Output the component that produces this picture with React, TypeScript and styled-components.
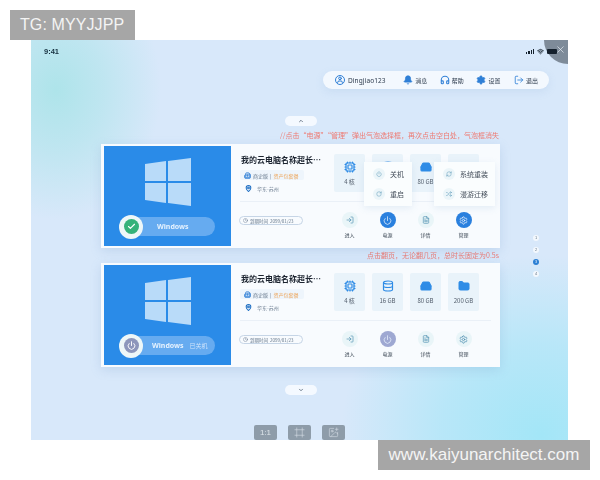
import React from 'react'
import styled, { createGlobalStyle } from 'styled-components'
import {
  Bell, Building2, Check, ChevronDown, ChevronUp, Clock, Cpu, Database, FileText, Folder, Frame, HardDrive,
  Headphones, ImagePlus, LogIn, LogOut, MapPin, Power, RefreshCw, RotateCw, Settings, Shuffle, User, Wifi, X
} from 'lucide-react'

const GlobalStyle = createGlobalStyle`
  html, body { margin: 0; padding: 0; background: #fff; }
  * { box-sizing: border-box; }
  body { font-family: "Noto Sans CJK SC", "Noto Sans", sans-serif; }
`

const specs = [
  { icon: <Cpu size={12} strokeWidth={2.4} />, label: '4 核', covered: false },
  { icon: <Database size={12} strokeWidth={2.4} />, label: '16 GB', covered: true },
  { icon: <HardDrive size={12} strokeWidth={2.4} fill="#2f8ce6" />, label: '80 GB', covered: false },
  { icon: <Folder size={12} strokeWidth={2} fill="#2f8ce6" />, label: '200 GB', covered: true },
]

function WindowsLogo() {
  return (
    <svg width="46" height="48" viewBox="0 0 46 48">
      <g fill="#b9dbf9">
        <polygon points="0,6 21,3 21,23 0,23" />
        <polygon points="23,3 46,0 46,23 23,23" />
        <polygon points="0,25 21,25 21,45 0,42" />
        <polygon points="23,25 46,25 46,48 23,45" />
      </g>
    </svg>
  )
}

function MachineCard({ on }: { on: boolean }) {
  const actionState = on ? 'active' : 'off'
  return (
    <Card>
      <SystemPanel>
        <WindowsLogo />
        <SystemPill>
          <StatusHalo>
            <StatusDot $on={on}>
              {on ? <Check size={9} strokeWidth={3} /> : <Power size={9} strokeWidth={2.5} />}
            </StatusDot>
          </StatusHalo>
          <SystemName $on={on}>Windows</SystemName>
          {!on && <SystemState>已关机</SystemState>}
        </SystemPill>
      </SystemPanel>
      <CardBody>
        <TopRow>
          <Info>
            <Title>我的云电脑名称超长…</Title>
            <Tag>
              <Building2 size={7} color="#2f7fd6" strokeWidth={3} />
              <span>商企版</span> | <em>资产包套餐</em>
            </Tag>
            <Place>
              <MapPin size={7} color="#1f6fc4" strokeWidth={3.5} />
              <span>华东-苏州</span>
            </Place>
          </Info>
          <ColumnGrid>
            {specs.map((s) => (
              <Spec key={s.label}>
                <SpecIcon>{s.icon}</SpecIcon>
                {/* the bubbles sit on top of these labels while the card is on */}
                {!(on && s.covered) && <SpecLabel>{s.label}</SpecLabel>}
              </Spec>
            ))}
          </ColumnGrid>
        </TopRow>
        <BottomRow>
          <Expiry>
            <Clock size={5} />
            到期时间&nbsp;&nbsp;2099/01/23
          </Expiry>
          <ColumnGrid>
            <Action>
              <ActionCircle><LogIn size={8} /></ActionCircle>
              <ActionLabel>进入</ActionLabel>
            </Action>
            <Action>
              <ActionCircle $state={actionState}><Power size={9} /></ActionCircle>
              <ActionLabel>电源</ActionLabel>
            </Action>
            <Action>
              <ActionCircle><FileText size={8} /></ActionCircle>
              <ActionLabel>详情</ActionLabel>
            </Action>
            <Action>
              <ActionCircle $state={on ? 'active' : undefined}><Settings size={9} /></ActionCircle>
              <ActionLabel>管理</ActionLabel>
            </Action>
          </ColumnGrid>
        </BottomRow>
      </CardBody>
      {on && (
        <>
          <Bubble $left={263} $width={48}>
            <BubbleItem><BubbleIcon><Power size={6} /></BubbleIcon>关机</BubbleItem>
            <BubbleItem><BubbleIcon><RotateCw size={6} /></BubbleIcon>重启</BubbleItem>
          </Bubble>
          <Bubble $left={333} $width={61}>
            <BubbleItem><BubbleIcon><RefreshCw size={6} /></BubbleIcon>系统重装</BubbleItem>
            <BubbleItem><BubbleIcon><Shuffle size={6} /></BubbleIcon>漫游迁移</BubbleItem>
          </Bubble>
        </>
      )}
    </Card>
  )
}

export default function App() {
  return (
    <Page>
      <GlobalStyle />
      <Screen>
        <Corner><X size={11} strokeWidth={1.5} /></Corner>
        <StatusBar>
          <Time>9:41</Time>
          <StatusIcons>
            <Bars><i /><i /><i /><i /></Bars>
            <Wifi size={7} strokeWidth={3} />
            <Battery />
          </StatusIcons>
        </StatusBar>
        <NavRow>
          <NavPill>
            <UserBlock>
              <Avatar><User size={8} strokeWidth={3} /></Avatar>
              Dingjiao123
            </UserBlock>
            <NavItem><Bell size={10} color="#2f7fd6" fill="#2f7fd6" />消息</NavItem>
            <NavItem><Headphones size={10} color="#2f7fd6" strokeWidth={2.6} />帮助</NavItem>
            <NavItem><Settings size={10} color="#2f7fd6" fill="#2f7fd6" />设置</NavItem>
            <NavItem><LogOut size={10} color="#2f7fd6" />退出</NavItem>
          </NavPill>
        </NavRow>
        <PagerPill><ChevronUp size={6} strokeWidth={3} /></PagerPill>
        <Hint $height={18}>{'//点击“电源”“管理”弹出气泡选择框\uFF0C再次点击空白处\uFF0C气泡框消失'}</Hint>
        <MachineCard on />
        <Hint $height={15}>{'点击翻页\uFF0C无论翻几页\uFF0C总时长固定为0.5s'}</Hint>
        <MachineCard on={false} />
        <PagerPill $bottom><ChevronDown size={6} strokeWidth={3} /></PagerPill>
        <ToolBar>
          <ToolButton>1:1</ToolButton>
          <ToolButton><Frame size={11} strokeWidth={1.2} /></ToolButton>
          <ToolButton><ImagePlus size={11} strokeWidth={1.2} /></ToolButton>
        </ToolBar>
        <PageDots>
          <Dot>1</Dot>
          <Dot>2</Dot>
          <Dot $active>3</Dot>
          <Dot>4</Dot>
        </PageDots>
      </Screen>
      <TopMark>TG: MYYJJPP</TopMark>
      <BottomMark>www.kaiyunarchitect.com</BottomMark>
    </Page>
  )
}

const Page = styled.div`
  position: relative;
  width: 600px;
  height: 480px;
  padding: 40px 0 0 31px;
  background: #fff;
  overflow: hidden;
`

const TopMark = styled.div`
  position: absolute;
  left: 10px;
  top: 10px;
  width: 125px;
  height: 30px;
  background: #a6a6a6;
  color: #f4f4f4;
  font: 16px/30px "Liberation Sans", sans-serif;
  letter-spacing: 0.1px;
  padding-left: 10px;
`

const BottomMark = styled.div`
  position: absolute;
  left: 378px;
  top: 440px;
  width: 212px;
  height: 30px;
  background: #a6a6a6;
  color: #f4f4f4;
  font: 17px/30px "Liberation Sans", sans-serif;
  text-align: center;
`

const Screen = styled.div`
  position: relative;
  width: 537px;
  height: 400px;
  padding: 0 68px 0 70px;
  overflow: hidden;
  display: flex;
  flex-direction: column;
  filter: blur(0.35px);
  background:
    radial-gradient(ellipse 105px 130px at 25px 50px, #aee4ea 0%, rgba(174, 228, 234, 0.6) 45%, rgba(174, 228, 234, 0) 100%),
    radial-gradient(ellipse 200px 180px at 510px 395px, #a3e6f7 0%, rgba(163, 230, 247, 0.6) 50%, rgba(163, 230, 247, 0) 100%),
    #d8e8fa;
`

const Corner = styled.div`
  position: absolute;
  top: -24px;
  right: -24px;
  width: 48px;
  height: 48px;
  border-radius: 50%;
  background: #7e8b99;
  color: #e8eef4;
  & svg { position: absolute; left: 11px; top: 28px; }
`

const StatusBar = styled.div`
  position: relative;
  height: 22px;
  margin: 0 -57px 0 -57px;
  display: flex;
  align-items: center;
  justify-content: space-between;
`

const Time = styled.span`
  font: 700 7.5px "Liberation Sans", sans-serif;
  color: #16303f;
`

const StatusIcons = styled.div`
  display: flex;
  align-items: center;
  gap: 3px;
  color: #14202c;
`

const Bars = styled.div`
  display: flex;
  align-items: flex-end;
  gap: 1px;
  height: 5px;
  & i { display: block; width: 1.2px; background: #14202c; }
  & i:nth-child(1) { height: 2px; }
  & i:nth-child(2) { height: 3px; }
  & i:nth-child(3) { height: 4px; }
  & i:nth-child(4) { height: 5px; }
`

const Battery = styled.div`
  width: 10px;
  height: 5px;
  border-radius: 1px;
  background: #14202c;
`

const NavRow = styled.div`
  display: flex;
  justify-content: flex-end;
  margin: 9px -49px 0 0;
`

const NavPill = styled.div`
  display: flex;
  align-items: center;
  width: 226px;
  height: 18px;
  padding: 0 11px 0 12px;
  border-radius: 9px;
  background: #f3f8fe;
  box-shadow: 0 3px 8px rgba(120, 160, 210, 0.15);
`

const UserBlock = styled.div`
  display: flex;
  align-items: center;
  gap: 3px;
  width: 69px;
  font: 6.5px "Noto Sans", sans-serif;
  color: #2c3a4c;
  letter-spacing: 0.1px;
`

const Avatar = styled.span`
  display: flex;
  align-items: center;
  justify-content: center;
  width: 10px;
  height: 10px;
  border-radius: 50%;
  border: 1px solid #2f7fd6;
  color: #2f7fd6;
  overflow: hidden;
`

const NavItem = styled.div`
  display: flex;
  align-items: center;
  gap: 2px;
  width: 37px;
  font-size: 6px;
  color: #2c3a4c;
  white-space: nowrap;
  &:last-child { width: 24px; margin-left: 1px; }
`

const PagerPill = styled.div<{ $bottom?: boolean }>`
  align-self: center;
  display: flex;
  align-items: center;
  justify-content: center;
  width: 32px;
  height: 10px;
  margin-top: ${(p) => (p.$bottom ? '18px' : '27px')};
  border-radius: 5px;
  background: #f4f9ff;
  color: #4a5a6c;
`

const Hint = styled.div<{ $height: number }>`
  height: ${(p) => p.$height}px;
  line-height: ${(p) => p.$height}px;
  font-size: 7px;
  color: #ee7a72;
  text-align: right;
  white-space: nowrap;
  margin-right: 1px;
`

const Card = styled.div`
  position: relative;
  flex: none;
  display: flex;
  width: 399px;
  height: 104px;
  padding: 2px 0 2px 3px;
  background: #f8fbfe;
  box-shadow: 0 3px 10px rgba(110, 150, 200, 0.22);
`

const SystemPanel = styled.div`
  flex: none;
  width: 127px;
  height: 100px;
  padding-top: 12px;
  display: flex;
  flex-direction: column;
  align-items: center;
  gap: 11px;
  background: #2a8be8;
`

const SystemPill = styled.div`
  display: flex;
  align-items: center;
  width: 95px;
  height: 19px;
  border-radius: 10px;
  background: #66abf0;
  color: #e6f2fe;
`

const StatusHalo = styled.div`
  flex: none;
  display: flex;
  align-items: center;
  justify-content: center;
  width: 24px;
  height: 24px;
  margin-left: -1px;
  border-radius: 50%;
  background: #eef7f8;
`

const StatusDot = styled.div<{ $on: boolean }>`
  display: flex;
  align-items: center;
  justify-content: center;
  width: 15px;
  height: 15px;
  border-radius: 50%;
  background: ${(p) => (p.$on ? '#35b27a' : '#8d96bb')};
  color: #fff;
`

const SystemName = styled.span<{ $on: boolean }>`
  font: 700 7px "Noto Sans", sans-serif;
  margin-left: ${(p) => (p.$on ? '14px' : '9px')};
`

const SystemState = styled.span`
  font-size: 6px;
  margin-left: 6px;
  color: #cfe4fb;
`

const CardBody = styled.div`
  flex: 1;
  min-width: 0;
  display: flex;
  flex-direction: column;
  padding-left: 9px;
`

const TopRow = styled.div`
  display: grid;
  grid-template-columns: 94px 1fr;
  height: 56px;
  padding-top: 8px;
  margin-right: 9px;
  border-bottom: 1px solid #eaf0f7;
`

const BottomRow = styled.div`
  display: grid;
  grid-template-columns: 94px 1fr;
  align-items: start;
  padding-top: 10px;
`

const ColumnGrid = styled.div`
  display: grid;
  grid-template-columns: repeat(4, 31px);
  gap: 7px;
`

const Info = styled.div`
  display: flex;
  flex-direction: column;
  align-items: flex-start;
`

const Title = styled.div`
  margin-left: 1px;
  font-size: 8px;
  line-height: 11px;
  font-weight: 700;
  color: #1c2430;
  white-space: nowrap;
`

const Tag = styled.div`
  display: flex;
  align-items: center;
  gap: 2px;
  width: 64px;
  height: 10px;
  margin-top: 5px;
  padding-left: 4px;
  border-radius: 2px;
  background: #eef5fc;
  font-size: 5px;
  color: #66788c;
  white-space: nowrap;
  & em { font-style: normal; color: #eda65c; }
`

const Place = styled.div`
  display: flex;
  align-items: center;
  gap: 5px;
  margin-top: 5px;
  padding-left: 5px;
  font-size: 5px;
  color: #66788c;
`

const Spec = styled.div`
  height: 38px;
  display: flex;
  flex-direction: column;
  align-items: center;
  padding-top: 7px;
  border-radius: 2px;
  background: #e9f3fa;
`

const SpecIcon = styled.div`
  display: flex;
  height: 13px;
  color: #2f8ce6;
`

const SpecLabel = styled.div`
  margin-top: 4px;
  font-size: 6px;
  line-height: 8px;
  color: #55606e;
  white-space: nowrap;
`

const Expiry = styled.div`
  display: flex;
  align-items: center;
  gap: 2px;
  width: 64px;
  height: 9px;
  margin-top: 4px;
  margin-left: -1px;
  padding-left: 3px;
  border: 1px solid #c6d5e6;
  border-radius: 5px;
  font-size: 4.5px;
  color: #66788c;
  white-space: nowrap;
`

const Action = styled.div`
  display: flex;
  flex-direction: column;
  align-items: center;
`

const ActionCircle = styled.div<{ $state?: string }>`
  display: flex;
  align-items: center;
  justify-content: center;
  width: 16px;
  height: 16px;
  border-radius: 50%;
  background: ${(p) => (p.$state === 'active' ? '#2a80de' : p.$state === 'off' ? '#9ea8d2' : '#e9f5f8')};
  color: ${(p) => (p.$state ? '#e8f2fd' : '#4f8fb0')};
`

const ActionLabel = styled.div`
  margin-top: 3px;
  font-size: 5px;
  line-height: 7px;
  color: #3b4754;
`

const Bubble = styled.div<{ $left: number; $width: number }>`
  position: absolute;
  left: ${(p) => p.$left}px;
  top: 18px;
  width: ${(p) => p.$width}px;
  height: 44px;
  padding: 2px 0 0 9px;
  display: flex;
  flex-direction: column;
  background: #fafdfe;
  box-shadow: 0 2px 7px rgba(120, 160, 200, 0.16);
`

const BubbleItem = styled.div`
  display: flex;
  align-items: center;
  gap: 5px;
  height: 20px;
  font-size: 7px;
  color: #46505c;
  white-space: nowrap;
`

const BubbleIcon = styled.span`
  display: flex;
  align-items: center;
  justify-content: center;
  width: 12px;
  height: 12px;
  border-radius: 50%;
  background: #ebf5f9;
  color: #5f9ab8;
`

const ToolBar = styled.div`
  display: flex;
  justify-content: center;
  gap: 11px;
  margin-top: 30px;
  margin-left: -2px;
`

const ToolButton = styled.div`
  display: flex;
  align-items: center;
  justify-content: center;
  width: 23px;
  height: 15px;
  border-radius: 2px;
  background: #8e9ca9;
  color: #dde4ea;
  font: 8px "Liberation Sans", sans-serif;
`

const PageDots = styled.div`
  position: absolute;
  left: 502px;
  top: 195px;
  display: flex;
  flex-direction: column;
  gap: 6px;
`

const Dot = styled.div<{ $active?: boolean }>`
  width: 6px;
  height: 6px;
  border-radius: 50%;
  background: ${(p) => (p.$active ? '#2a7fd4' : '#f3f8fd')};
  color: ${(p) => (p.$active ? '#e8f2fd' : '#6a7a8a')};
  font: 4px/6px "Liberation Sans", sans-serif;
  text-align: center;
`
